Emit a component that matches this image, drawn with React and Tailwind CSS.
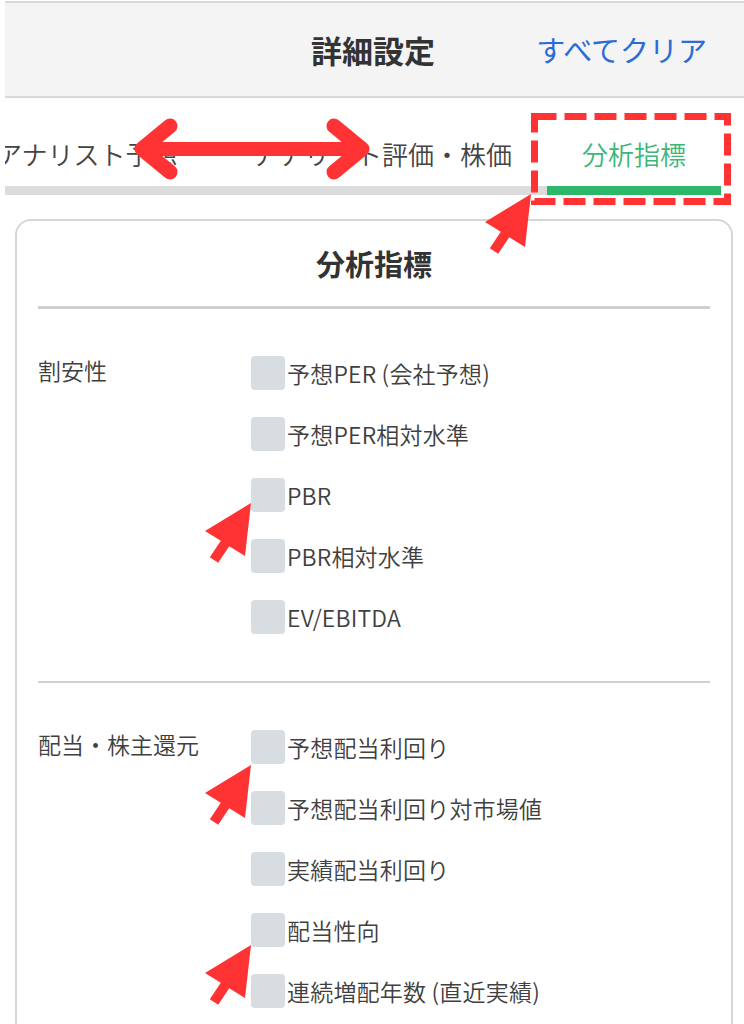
import React from "react";

const sec1 = ["予想PER (会社予想)", "予想PER相対水準", "PBR", "PBR相対水準", "EV/EBITDA"];
const sec2 = ["予想配当利回り", "予想配当利回り対市場値", "実績配当利回り", "配当性向", "連続増配年数 (直近実績)"];

function Section({ label, items }) {
  return (
    <div className="flex py-[47px]">
      <div className="w-[213px] shrink-0 h-[34px] flex items-center text-[23px] leading-[34px] font-[350] text-[#404040] -mt-[3px]">
        {label}
      </div>
      <div className="flex flex-col gap-[27px]">
        {items.map((t) => (
          <div key={t} className="flex items-center h-[34px]">
            <div className="w-[34px] h-[34px] rounded-[4px] bg-[#d7dde0] shrink-0" />
            <span className="ml-[2px] text-[23px] leading-[34px] font-[350] text-[#404040] whitespace-nowrap tracking-[0.2px]">{t}</span>
          </div>
        ))}
      </div>
    </div>
  );
}

function Cursor({ dx, dy }) {
  const pts = [
    [251, 503],
    [245, 556],
    [229.2, 546.2],
    [218.2, 562.7],
    [209.8, 557.3],
    [220.8, 540.8],
    [205, 531],
  ]
    .map(([x, y]) => `${x + dx},${y + dy}`)
    .join(" ");
  return <polygon points={pts} fill="#ff3333" />;
}

export default function App() {
  return (
    <div className="relative w-[744px] h-[1024px] overflow-hidden bg-white font-['Noto_Sans_CJK_JP','Noto_Sans',sans-serif]">
      <div className="ml-[5px]">
        {/* header */}
        <div className="mt-[1px] h-[97px] border-y-2 border-[#d9d9d9] bg-[#f4f4f4] grid grid-cols-[1fr_auto_1fr] items-center">
          <div />
          <div className="text-[31px] font-bold text-[#333333] leading-none -ml-[3px]">詳細設定</div>
          <div className="justify-self-end mr-[37px] text-[29px] text-[#2b6cd6] leading-none">すべてクリア</div>
        </div>
        {/* tabs */}
        <div className="overflow-hidden">
          <div className="flex -ml-[44px] whitespace-nowrap">
            <div className="h-[97px] pl-[35px] pr-[40px] pb-[19px] flex items-end border-b-[9px] border-[#dcdcdc] text-[26px] leading-[26px] font-[350] text-[#444444]">
              アナリスト予想
            </div>
            <div className="h-[97px] px-[35px] pb-[19px] flex items-end border-b-[9px] border-[#dcdcdc] text-[26px] leading-[26px] font-[350] text-[#444444]">
              アナリスト評価・株価
            </div>
            <div className="h-[97px] px-[35px] pb-[19px] flex items-end border-b-[9px] border-[#2bb86b] text-[26px] leading-[26px] font-[350] text-[#3db676]">
              分析指標
            </div>
          </div>
        </div>
        {/* card */}
        <div className="mt-[24px] ml-[10px] mr-[11px] border-2 border-[#d6d6d6] rounded-[16px] px-[21px] pb-[40px]">
          <div className="pt-[28px] pb-[28px] text-center text-[29px] font-bold leading-[29px] text-[#333333]">分析指標</div>
          <div className="h-[3px] bg-[#d0d0d0]" />
          <Section label="割安性" items={sec1} />
          <div className="h-[2px] bg-[#d0d0d0]" />
          <Section label="配当・株主還元" items={sec2} />
        </div>
      </div>

      {/* annotations */}
      <svg className="absolute left-0 top-0 pointer-events-none" width="744" height="1024" viewBox="0 0 744 1024">
        <rect x="534.5" y="116.5" width="193" height="85" fill="none" stroke="#ff3333" strokeWidth="7" strokeDasharray="22 8" />
        <line x1="145" y1="149" x2="358" y2="149" stroke="#ff3333" strokeWidth="14" strokeLinecap="round" />
        <polyline points="170,126 142,149 170,172" fill="none" stroke="#ff3333" strokeWidth="15" strokeLinecap="round" strokeLinejoin="round" />
        <polyline points="334,126 362,149 334,172" fill="none" stroke="#ff3333" strokeWidth="15" strokeLinecap="round" strokeLinejoin="round" />
        <Cursor dx={280} dy={-309} />
        <Cursor dx={0} dy={0} />
        <Cursor dx={0} dy={262} />
        <Cursor dx={0} dy={442} />
      </svg>
    </div>
  );
}
